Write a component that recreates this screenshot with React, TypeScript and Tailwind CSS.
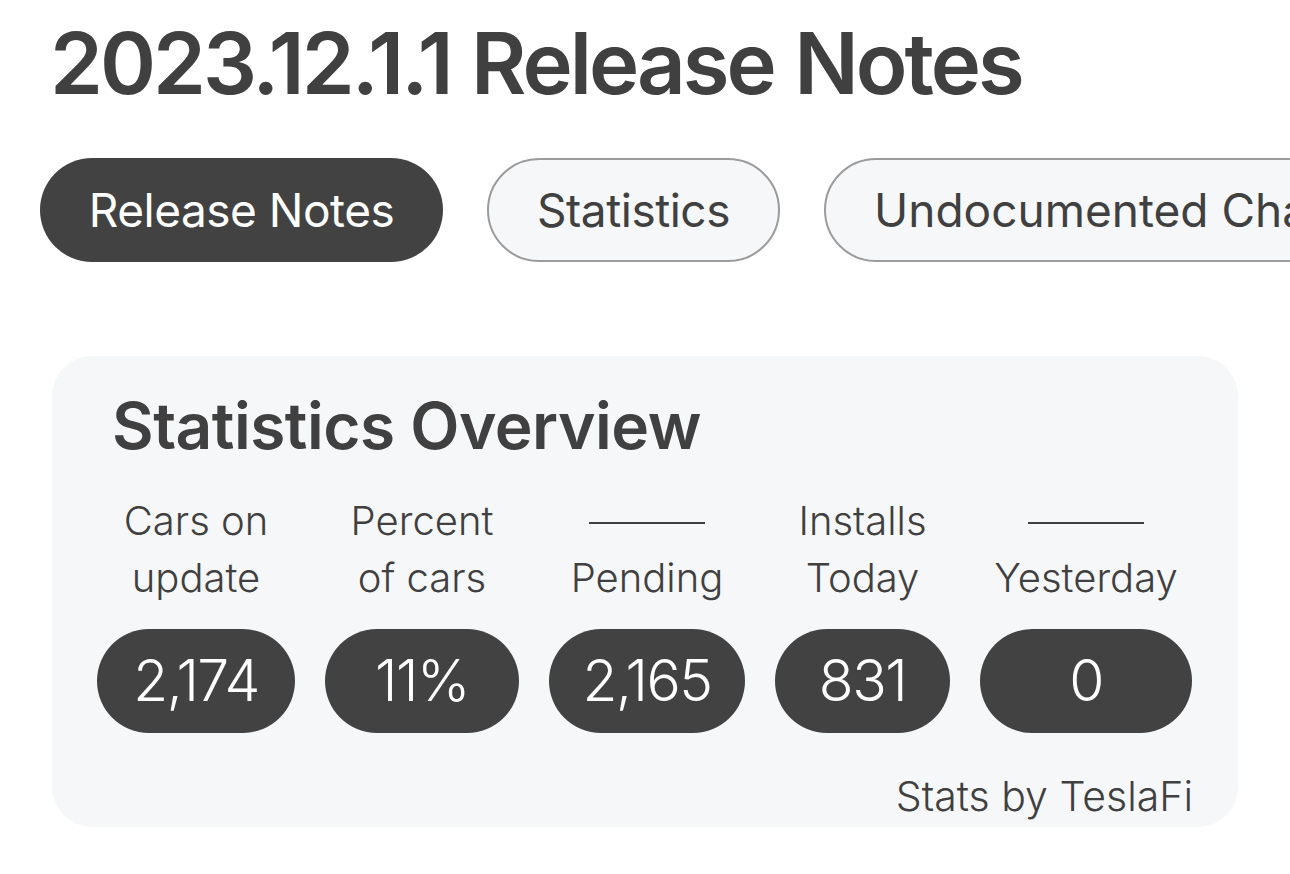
import React from 'react';

type Stat = {
  top: string | null;
  bottom: string;
  value: string;
  width: string;
};

const stats: Stat[] = [
  { top: 'Cars on', bottom: 'update', value: '2,174', width: 'w-[198px]' },
  { top: 'Percent', bottom: 'of cars', value: '11%', width: 'w-[194px]' },
  { top: null, bottom: 'Pending', value: '2,165', width: 'w-[196px]' },
  { top: 'Installs', bottom: 'Today', value: '831', width: 'w-[175px]' },
  { top: null, bottom: 'Yesterday', value: '0', width: 'w-[212px]' },
];

export default function App() {
  return (
    <div className="w-[1290px] h-[874px] overflow-hidden bg-white text-[#404040] font-['Inter',sans-serif]">
      <h1 className="pl-[50px] pt-[14px] text-[85px] leading-[100px] font-semibold tracking-[-3px] [word-spacing:2px] whitespace-nowrap">
        2023.12.1.1 Release Notes
      </h1>

      <div className="mt-[44px] pl-[40px] flex gap-[44px] whitespace-nowrap">
        <button className="h-[104px] w-[403px] shrink-0 rounded-full bg-[#424242] text-white text-[46px] tracking-[-0.5px]">
          Release Notes
        </button>
        <button className="h-[104px] w-[293px] shrink-0 rounded-full bg-[#f6f7f9] border-2 border-[#9b9b9b] text-[46px] tracking-[-0.5px]">
          Statistics
        </button>
        <button className="h-[104px] shrink-0 rounded-full bg-[#f6f7f9] border-2 border-[#9b9b9b] text-[46px] pl-[48px] pr-[50px] text-left">
          Undocumented Changes
        </button>
      </div>

      <div className="mt-[94px] ml-[52px] w-[1186px] h-[471px] rounded-[40px] bg-[#f6f7f9] pt-[30px] pl-[45px] pr-[45px]">
        <h2 className="pl-[15px] text-[64px] leading-[80px] font-semibold tracking-[-0.5px]">
          Statistics Overview
        </h2>

        <div className="mt-[26px] flex gap-[30px]">
          {stats.map((s) => (
            <div key={s.value} className={`${s.width} flex flex-col items-center`}>
              <div className="text-[40px] leading-[57px] font-light text-center">
                {s.top ? s.top : <div className="w-[116px] h-[2px] bg-[#404040] mt-[30px] mb-[25px]" />}
              </div>
              <div className="text-[40px] leading-[57px] font-light text-center">{s.bottom}</div>
              <div className="mt-[23px] w-full h-[104px] rounded-full bg-[#424242] text-white text-[57px] font-light flex items-center justify-center tracking-[-1.5px]">
                {s.value}
              </div>
            </div>
          ))}
        </div>

        <div className="mt-[38px] text-right text-[41px] leading-[50px] font-light">
          Stats by TeslaFi
        </div>
      </div>
    </div>
  );
}
